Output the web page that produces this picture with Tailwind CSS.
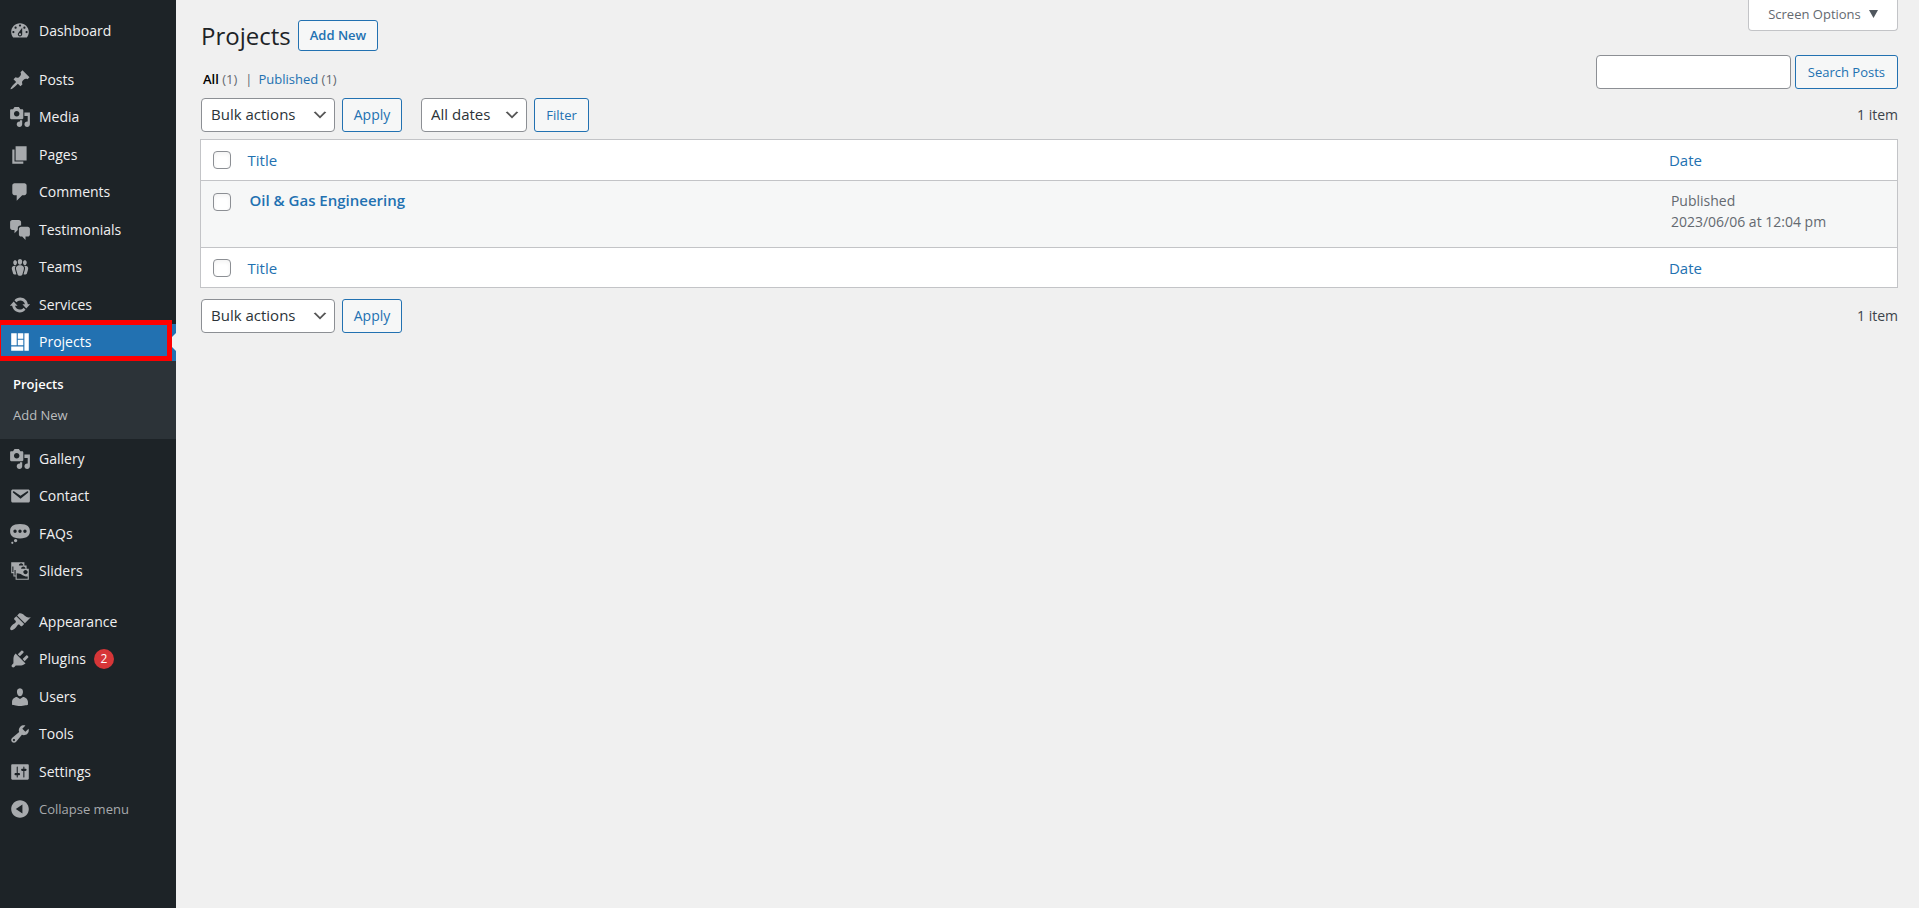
<!DOCTYPE html>
<html lang="en">
<head>
  <meta charset="UTF-8" />
  <meta name="viewport" content="width=device-width, initial-scale=1.0" />
  <title>Projects - Admin</title>
  <script src="https://cdn.jsdelivr.net/npm/@tailwindcss/browser@4"></script>
</head>
<body class="bg-[#f0f0f0] text-[#3c434a] text-sm font-['Open_Sans','Noto_Sans',sans-serif] min-h-screen flex">

  <!-- Admin menu -->
  <nav class="w-44 shrink-0 bg-[#1d2327] text-[#f0f0f1] text-sm pt-3" aria-label="Main menu">
    <ul class="grid auto-rows-fr h-[37px] mb-3">
      <li><a href="#" class="flex items-center h-full pl-[9px] gap-2">
        <svg class="size-[22px] fill-[#a7aaad]" viewBox="0 0 20 20"><path d="M3.76 16h12.48c1.1-1.37 1.76-3.11 1.76-5 0-4.42-3.58-8-8-8s-8 3.58-8 8c0 1.89.66 3.63 1.76 5zM10 4c.55 0 1 .45 1 1s-.45 1-1 1-1-.45-1-1 .45-1 1-1zM6 6c.55 0 1 .45 1 1s-.45 1-1 1-1-.45-1-1 .45-1 1-1zm8 0c.55 0 1 .45 1 1s-.45 1-1 1-1-.45-1-1 .45-1 1-1zm-5.37 5.55L12 7v6c0 1.1-.9 2-2 2s-2-.9-2-2c0-.57.24-1.08.63-1.45zM4 10c.55 0 1 .45 1 1s-.45 1-1 1-1-.45-1-1 .45-1 1-1zm12 0c.55 0 1 .45 1 1s-.45 1-1 1-1-.45-1-1 .45-1 1-1zm-5 3c0-.55-.45-1-1-1s-1 .45-1 1 .45 1 1 1 1-.45 1-1z" fill-rule="evenodd"/></svg>
        Dashboard</a></li>
    </ul>

    <ul class="grid auto-rows-fr h-[300px]">
      <li><a href="#" class="flex items-center h-full pl-[9px] gap-2">
        <svg class="size-[22px] fill-[#a7aaad]" viewBox="0 0 20 20"><path d="M10.44 3.02l1.82-1.82 6.36 6.35-1.83 1.82c-1.05-.68-2.48-.57-3.41.36l-.75.75c-.92.93-1.04 2.35-.35 3.41l-1.83 1.82-2.41-2.41-2.8 2.79c-.42.42-3.38 2.71-3.8 2.29s1.86-3.39 2.28-3.81l2.79-2.79L4.1 9.36l1.83-1.82c1.05.69 2.48.57 3.4-.36l.75-.75c.93-.92 1.05-2.35.36-3.41z"/></svg>
        Posts</a></li>
      <li><a href="#" class="flex items-center h-full pl-[9px] gap-2">
        <svg class="size-[22px] fill-[#a7aaad]" viewBox="0 0 20 20"><path d="M13 11V4c0-.55-.45-1-1-1h-1.67L9 1H5L3.67 3H2c-.55 0-1 .45-1 1v7c0 .55.45 1 1 1h10c.55 0 1-.45 1-1zM7 4.5c1.38 0 2.5 1.12 2.5 2.5S8.38 9.5 7 9.5 4.5 8.38 4.5 7 5.62 4.5 7 4.5zM14 6h5v10.5c0 1.38-1.12 2.5-2.5 2.5S14 17.88 14 16.5s1.12-2.5 2.5-2.5c.17 0 .34.02.5.05V9h-3V6zm-4 8.05V13h2v3.5c0 1.38-1.12 2.5-2.5 2.5S7 17.88 7 16.5 8.12 14 9.5 14c.17 0 .34.02.5.05z" fill-rule="evenodd"/></svg>
        Media</a></li>
      <li><a href="#" class="flex items-center h-full pl-[9px] gap-2">
        <svg class="size-[22px] fill-[#a7aaad]" viewBox="0 0 20 20"><path d="M6 15V2h10v13H6zm-1 1h8v2H3V5h2v11z"/></svg>
        Pages</a></li>
      <li><a href="#" class="flex items-center h-full pl-[9px] gap-2">
        <svg class="size-[22px] fill-[#a7aaad]" viewBox="0 0 20 20"><path d="M5 2h9c1.1 0 2 .9 2 2v7c0 1.1-.9 2-2 2h-2l-5 5v-5H5c-1.1 0-2-.9-2-2V4c0-1.1.9-2 2-2z"/></svg>
        Comments</a></li>
      <li><a href="#" class="flex items-center h-full pl-[9px] gap-2">
        <svg class="size-[22px] fill-[#a7aaad]" viewBox="0 0 20 20"><path d="M11 6h-.82C9.07 6 8 7.2 8 8.16V10l-3 3v-3H3c-1.1 0-2-.9-2-2V3c0-1.1.9-2 2-2h6c1.1 0 2 .9 2 2v3zm0 1h6c1.1 0 2 .9 2 2v5c0 1.1-.9 2-2 2h-2v3l-3-3h-1c-1.1 0-2-.9-2-2V9c0-1.1.9-2 2-2z"/></svg>
        Testimonials</a></li>
      <li><a href="#" class="flex items-center h-full pl-[9px] gap-2">
        <svg class="size-[22px] fill-[#a7aaad]" viewBox="0 0 20 20"><path d="M8.03 4.46c-.29 1.28.55 3.46 1.97 3.46 1.41 0 2.25-2.18 1.96-3.46-.22-.98-1.08-1.63-1.96-1.63-.89 0-1.74.65-1.97 1.63zm-4.13.9c-.25 1.08.47 2.93 1.67 2.93s1.92-1.85 1.67-2.93c-.19-.83-.92-1.39-1.67-1.39s-1.48.56-1.67 1.39zm8.86 0c-.25 1.08.47 2.93 1.66 2.93 1.2 0 1.92-1.85 1.67-2.93-.19-.83-.92-1.39-1.67-1.39-.74 0-1.47.56-1.66 1.39zm-.59 11.43l1.25-4.3C14.2 10 12.71 8.47 10 8.47c-2.72 0-4.21 1.53-3.44 4.02l1.26 4.3C8.05 17.51 9 18 10 18c.98 0 1.94-.49 2.17-1.21zm-6.1-7.63c-.49.67-.96 1.83-.42 3.59l1.12 3.79c-.34.2-.77.31-1.2.31-.85 0-1.65-.41-1.85-1.03l-1.07-3.65c-.65-2.11.61-3.4 2.92-3.4.27 0 .54.02.79.06-.1.1-.2.22-.29.33zm8.35-.39c2.31 0 3.58 1.29 2.92 3.4l-1.07 3.65c-.2.62-1 1.03-1.85 1.03-.43 0-.86-.11-1.2-.31l1.11-3.77c.55-1.78.08-2.94-.42-3.61-.08-.11-.18-.23-.28-.33.25-.04.51-.06.79-.06z"/></svg>
        Teams</a></li>
      <li><a href="#" class="flex items-center h-full pl-[9px] gap-2">
        <svg class="size-[22px] fill-[#a7aaad]" viewBox="0 0 20 20"><path d="M10.2 3.28c3.53 0 6.43 2.61 6.92 6h2.08l-3.5 4-3.5-4h2.32c-.45-1.97-2.21-3.45-4.32-3.45-1.45 0-2.73.71-3.54 1.78L4.95 5.66C6.23 4.2 8.11 3.28 10.2 3.28zm-.4 13.44c-3.52 0-6.43-2.61-6.92-6H.8l3.5-4c1.17 1.33 2.33 2.67 3.5 4H5.48c.45 1.97 2.21 3.45 4.32 3.45 1.45 0 2.73-.71 3.54-1.78l1.71 1.95c-1.28 1.46-3.15 2.38-5.25 2.38z"/></svg>
        Services</a></li>
      <li class="relative bg-[#2271b1] text-white"><a href="#" aria-current="page" class="flex items-center h-full pl-[9px] gap-2">
        <svg class="size-[22px] fill-white" viewBox="0 0 20 20"><path d="M2 2h5v11H2V2zm6 0h5v5H8V2zm6 0h4v16h-4V2zM8 8h5v5H8V8zm-6 6h11v4H2v-4z"/></svg>
        Projects</a>
        <!-- notch towards the content -->
        <span class="absolute right-0 top-1/2 -translate-y-1/2 border-y-[9px] border-r-[9px] border-y-transparent border-r-[#f0f0f0]"></span>
        <!-- highlight frame -->
        <span class="absolute -left-1 -top-1 bottom-0 right-1 border-[5px] border-[#fe0000] pointer-events-none"></span>
      </li>
    </ul>

    <ul class="bg-[#2c3338] text-[13px] py-2 mb-px">
      <li><a href="#" class="block pl-[13px] h-[31px] leading-[31px] font-semibold text-white">Projects</a></li>
      <li><a href="#" class="block pl-[13px] h-[31px] leading-[31px] text-[#bbbdbf]">Add New</a></li>
    </ul>

    <ul class="grid auto-rows-fr h-[150px] mb-[13px]">
      <li><a href="#" class="flex items-center h-full pl-[9px] gap-2">
        <svg class="size-[22px] fill-[#a7aaad]" viewBox="0 0 20 20"><path d="M13 11V4c0-.55-.45-1-1-1h-1.67L9 1H5L3.67 3H2c-.55 0-1 .45-1 1v7c0 .55.45 1 1 1h10c.55 0 1-.45 1-1zM7 4.5c1.38 0 2.5 1.12 2.5 2.5S8.38 9.5 7 9.5 4.5 8.38 4.5 7 5.62 4.5 7 4.5zM14 6h5v10.5c0 1.38-1.12 2.5-2.5 2.5S14 17.88 14 16.5s1.12-2.5 2.5-2.5c.17 0 .34.02.5.05V9h-3V6zm-4 8.05V13h2v3.5c0 1.38-1.12 2.5-2.5 2.5S7 17.88 7 16.5 8.12 14 9.5 14c.17 0 .34.02.5.05z" fill-rule="evenodd"/></svg>
        Gallery</a></li>
      <li><a href="#" class="flex items-center h-full pl-[9px] gap-2">
        <svg class="size-[22px] fill-[#a7aaad]" viewBox="0 0 20 20"><path d="M3.87 4h13.25C18.37 4 19 4.59 19 5.79v8.42c0 1.19-.63 1.79-1.88 1.79H3.87c-1.25 0-1.88-.6-1.88-1.79V5.79c0-1.2.63-1.79 1.88-1.79zm6.62 8.6l6.74-5.53c.24-.2.43-.66.13-1.07-.29-.41-.82-.42-1.17-.17l-5.7 3.86L4.8 5.83c-.35-.25-.88-.24-1.17.17-.3.41-.11.87.13 1.07z" fill-rule="evenodd"/></svg>
        Contact</a></li>
      <li><a href="#" class="flex items-center h-full pl-[9px] gap-2">
        <svg class="size-[22px] fill-[#a7aaad]" viewBox="0 0 20 20"><path d="M10 1c7 0 9 2.91 9 6.5S17 14 10 14s-9-2.91-9-6.5S3 1 10 1zM5.5 9C6.33 9 7 8.33 7 7.5S6.33 6 5.5 6 4 6.67 4 7.5 4.67 9 5.5 9zM10 9c.83 0 1.5-.67 1.5-1.5S10.83 6 10 6s-1.5.67-1.5 1.5S9.17 9 10 9zm4.5 0c.83 0 1.5-.67 1.5-1.5S15.33 6 14.5 6 13 6.67 13 7.5 13.67 9 14.5 9zM6 14.5c.83 0 1.5.67 1.5 1.5s-.67 1.5-1.5 1.5-1.5-.67-1.5-1.5.67-1.5 1.5-1.5zm-3 2.5c.55 0 1 .45 1 1s-.45 1-1 1-1-.45-1-1 .45-1 1-1z" fill-rule="evenodd"/></svg>
        FAQs</a></li>
      <li><a href="#" class="flex items-center h-full pl-[9px] gap-2">
        <svg class="size-[22px] fill-[#a7aaad]" viewBox="0 0 20 20"><path d="M4 15v-3H2V2h12v3h2v3h2v10H6v-3H4zm7-12c-1.1 0-2 .9-2 2h4c0-1.1-.89-2-2-2zm-7 8V6H3v5h1zm7-3h4c0-1.1-.89-2-2-2-1.1 0-2 .9-2 2zm-5 6V9H5v5h1zm9-1c1.1 0 2-.89 2-2 0-1.1-.9-2-2-2s-2 .9-2 2c0 1.11.9 2 2 2zm2 4v-2c-5 0-5-3-10-3v5h10z" fill-rule="evenodd"/></svg>
        Sliders</a></li>
    </ul>

    <ul class="grid auto-rows-fr h-[225px]">
      <li><a href="#" class="flex items-center h-full pl-[9px] gap-2">
        <svg class="size-[22px] fill-[#a7aaad]" viewBox="0 0 20 20"><path d="M14.48 11.06L7.41 3.99l1.5-1.5c.5-.56 2.3-.47 3.51.32 1.21.8 1.43 1.28 2.91 2.1 1.18.64 2.45 1.26 4.45.85zm-.71.71L6.7 4.7 4.93 6.47c-.39.39-.39 1.02 0 1.41l1.06 1.06c.39.39.39 1.03 0 1.42-.6.6-1.43 1.11-2.21 1.69-.35.26-.7.53-1.01.84C1.43 14.23.4 16.08 1.4 17.07c.99 1 2.84-.03 4.18-1.36.31-.31.58-.66.85-1.02.57-.78 1.08-1.61 1.69-2.21.39-.39 1.02-.39 1.41 0l1.06 1.06c.39.39 1.02.39 1.41 0z"/></svg>
        Appearance</a></li>
      <li><a href="#" class="flex items-center h-full pl-[9px] gap-2">
        <svg class="size-[22px] fill-[#a7aaad]" viewBox="0 0 20 20"><path d="M13.11 4.36L9.87 7.6 8 5.73l3.24-3.24c.35-.34 1.05-.2 1.56.32.52.51.66 1.21.31 1.55zm-8 1.77l.91-1.12 9.01 9.01-1.19.84c-.71.71-2.63 1.16-3.82 1.16H6.14L4.9 17.26c-.59.59-1.54.59-2.12 0-.59-.58-.59-1.53 0-2.12l1.24-1.24v-3.88c0-1.13.4-3.19 1.09-3.89zm7.26 3.97l3.24-3.24c.34-.35 1.04-.21 1.55.31.52.51.66 1.21.31 1.55l-3.24 3.25z"/></svg>
        <span>Plugins</span>
        <span class="size-5 rounded-full bg-[#d63638] text-white text-xs leading-5 text-center">2</span></a></li>
      <li><a href="#" class="flex items-center h-full pl-[9px] gap-2">
        <svg class="size-[22px] fill-[#a7aaad]" viewBox="0 0 20 20"><path d="M10 9.25c-2.27 0-2.73-3.44-2.73-3.44C7 4.02 7.82 2 9.97 2c2.16 0 2.98 2.02 2.71 3.81 0 0-.41 3.44-2.68 3.44zm0 2.57L12.72 10c2.39 0 4.52 2.33 4.52 4.53v2.49s-3.65 1.13-7.24 1.13c-3.65 0-7.24-1.13-7.24-1.13v-2.49c0-2.25 1.94-4.48 4.47-4.48z"/></svg>
        Users</a></li>
      <li><a href="#" class="flex items-center h-full pl-[9px] gap-2">
        <svg class="size-[22px] fill-[#a7aaad]" viewBox="0 0 20 20"><path d="M16.68 9.77c-1.34 1.34-3.3 1.67-4.95.99l-5.41 6.52c-.99.99-2.59.99-3.58 0s-.99-2.59 0-3.57l6.52-5.42c-.68-1.65-.35-3.61.99-4.95 1.28-1.28 3.12-1.62 4.72-1.06l-2.89 2.89 2.82 2.82 2.86-2.87c.53 1.58.18 3.39-1.08 4.65zM3.81 16.21c.4.39 1.04.39 1.43 0 .4-.4.4-1.04 0-1.43-.39-.4-1.03-.4-1.43 0-.39.39-.39 1.03 0 1.43z" fill-rule="evenodd"/></svg>
        Tools</a></li>
      <li><a href="#" class="flex items-center h-full pl-[9px] gap-2">
        <svg class="size-[22px] fill-[#a7aaad]" viewBox="0 0 20 20"><path d="M18 16V4c0-.55-.45-1-1-1H3c-.55 0-1 .45-1 1v12c0 .55.45 1 1 1h14c.55 0 1-.45 1-1zM8 11h1c.55 0 1 .45 1 1s-.45 1-1 1H8v1.5c0 .28-.22.5-.5.5s-.5-.22-.5-.5V13H6c-.55 0-1-.45-1-1s.45-1 1-1h1V5.5c0-.28.22-.5.5-.5s.5.22.5.5V11zm5-2h-1c-.55 0-1-.45-1-1s.45-1 1-1h1V5.5c0-.28.22-.5.5-.5s.5.22.5.5V7h1c.55 0 1 .45 1 1s-.45 1-1 1h-1v5.5c0 .28-.22.5-.5.5s-.5-.22-.5-.5V9z" fill-rule="evenodd"/></svg>
        Settings</a></li>
      <li><button type="button" class="flex items-center w-full h-full pl-[9px] gap-2 text-[13px] text-[#a7aaad]">
        <svg class="size-[22px] fill-[#a7aaad]" viewBox="0 0 20 20"><path d="M10 2c4.42 0 8 3.58 8 8s-3.58 8-8 8-8-3.58-8-8 3.58-8 8-8zm2.2 12V6L6.2 10z" fill-rule="evenodd"/></svg>
        Collapse menu</button></li>
    </ul>
  </nav>

  <!-- Content -->
  <main class="flex-1 min-w-0 pl-6 pr-[21px]">
    <div class="flex justify-between items-start pl-px">
      <div class="flex items-center gap-[7px] pt-5">
        <h1 class="text-2xl leading-[30px] text-[#1d2327]">Projects</h1>
        <a href="#" class="border border-[#2271b1] rounded-[3px] bg-[#f6f7f7] text-[#2271b1] font-semibold text-[13px] leading-[29px] px-[11px]">Add New</a>
      </div>
      <button type="button" class="flex items-center justify-center gap-2 w-[150px] h-[31px] pb-0.5 border border-t-0 border-[#c3c4c7] rounded-b bg-white text-[13px] text-[#646970]">Screen Options
        <svg class="w-[9px] h-2 fill-[#50575e]" viewBox="0 0 9 8"><path d="M0 0h9L4.5 8z"/></svg>
      </button>
    </div>

    <div class="flex justify-between h-[47px] pl-px">
      <ul class="flex items-center pl-0.5 pt-[9px] text-[13px] text-[#646970]">
        <li><a href="#" class="font-semibold text-black">All</a> (1)</li>
        <li class="pl-2 pr-1.5">|</li>
        <li><a href="#" class="text-[#2271b1]">Published</a> (1)</li>
      </ul>
      <form class="flex gap-1 h-[34px] mt-1">
        <input type="search" aria-label="Search Posts" class="w-[195px] border border-[#8c8f94] rounded bg-white px-2" />
        <button type="submit" class="border border-[#2271b1] rounded-[3px] bg-[#f6f7f7] text-[#2271b1] text-[13px] px-3">Search Posts</button>
      </form>
    </div>

    <div class="flex items-center h-[34px] pl-px">
      <div class="relative h-full mr-[7px]">
        <select aria-label="Select bulk action" class="appearance-none h-full w-[134px] border border-[#8c8f94] rounded bg-white text-[#2c3338] text-[15px] pl-[9px]">
          <option>Bulk actions</option><option>Edit</option><option>Move to Trash</option>
        </select>
        <svg class="absolute right-1.5 top-2 size-[18px] fill-[#555] pointer-events-none" viewBox="0 0 20 20"><path d="M5 6l5 5 5-5 2 1-7 7-7-7z"/></svg>
      </div>
      <button type="button" class="h-full w-[60px] border border-[#2271b1] rounded-[3px] bg-[#f6f7f7] text-[#2271b1] mr-[19px]">Apply</button>
      <div class="relative h-full mr-[7px]">
        <select aria-label="Filter by date" class="appearance-none h-full w-[106px] border border-[#8c8f94] rounded bg-white text-[#2c3338] text-[15px] pl-[9px]">
          <option>All dates</option><option>June 2023</option>
        </select>
        <svg class="absolute right-1.5 top-2 size-[18px] fill-[#555] pointer-events-none" viewBox="0 0 20 20"><path d="M5 6l5 5 5-5 2 1-7 7-7-7z"/></svg>
      </div>
      <button type="button" class="h-full w-[55px] border border-[#2271b1] rounded-[3px] bg-[#f6f7f7] text-[#2271b1] text-[13px]">Filter</button>
      <span class="ml-auto">1 item</span>
    </div>

    <table class="w-full table-fixed border border-[#c3c4c7] bg-white text-left my-[7px]">
      <thead class="text-[15px] text-[#2271b1]">
        <tr class="h-[41px] border-b border-[#c3c4c7]">
          <th class="w-[38px] pl-3"><input type="checkbox" aria-label="Select all" class="block appearance-none size-[18px] border border-[#8c8f94] rounded bg-white shadow-inner" /></th>
          <th class="pl-[9px] pt-0.5 font-normal"><a href="#">Title</a></th>
          <th class="w-[14%] pl-[9px] pt-0.5 font-normal"><a href="#">Date</a></th>
        </tr>
      </thead>
      <tbody>
        <tr class="h-[67px] bg-[#f6f7f7] align-top border-b border-[#c3c4c7]">
          <td class="pl-3 pt-3"><input type="checkbox" aria-label="Select Oil &amp; Gas Engineering" class="block appearance-none size-[18px] border border-[#8c8f94] rounded bg-white shadow-inner" /></td>
          <td class="pl-[11px] pt-[9px] text-[15px] leading-[21px] font-semibold text-[#2271b1]"><a href="#">Oil &amp; Gas Engineering</a></td>
          <td class="pl-[11px] pt-[9px] leading-[21px] text-[#646970]">Published<br />2023/06/06 at 12:04 pm</td>
        </tr>
      </tbody>
      <tfoot class="text-[15px] text-[#2271b1]">
        <tr class="h-10">
          <th class="pl-3"><input type="checkbox" aria-label="Select all" class="block appearance-none size-[18px] border border-[#8c8f94] rounded bg-white shadow-inner" /></th>
          <th class="pl-[9px] pt-0.5 font-normal"><a href="#">Title</a></th>
          <th class="pl-[9px] pt-0.5 font-normal"><a href="#">Date</a></th>
        </tr>
      </tfoot>
    </table>

    <div class="flex items-center h-[34px] mt-[11px] pl-px">
      <div class="relative h-full mr-[7px]">
        <select aria-label="Select bulk action" class="appearance-none h-full w-[134px] border border-[#8c8f94] rounded bg-white text-[#2c3338] text-[15px] pl-[9px]">
          <option>Bulk actions</option><option>Edit</option><option>Move to Trash</option>
        </select>
        <svg class="absolute right-1.5 top-2 size-[18px] fill-[#555] pointer-events-none" viewBox="0 0 20 20"><path d="M5 6l5 5 5-5 2 1-7 7-7-7z"/></svg>
      </div>
      <button type="button" class="h-full w-[60px] border border-[#2271b1] rounded-[3px] bg-[#f6f7f7] text-[#2271b1]">Apply</button>
      <span class="ml-auto">1 item</span>
    </div>
  </main>

</body>
</html>
